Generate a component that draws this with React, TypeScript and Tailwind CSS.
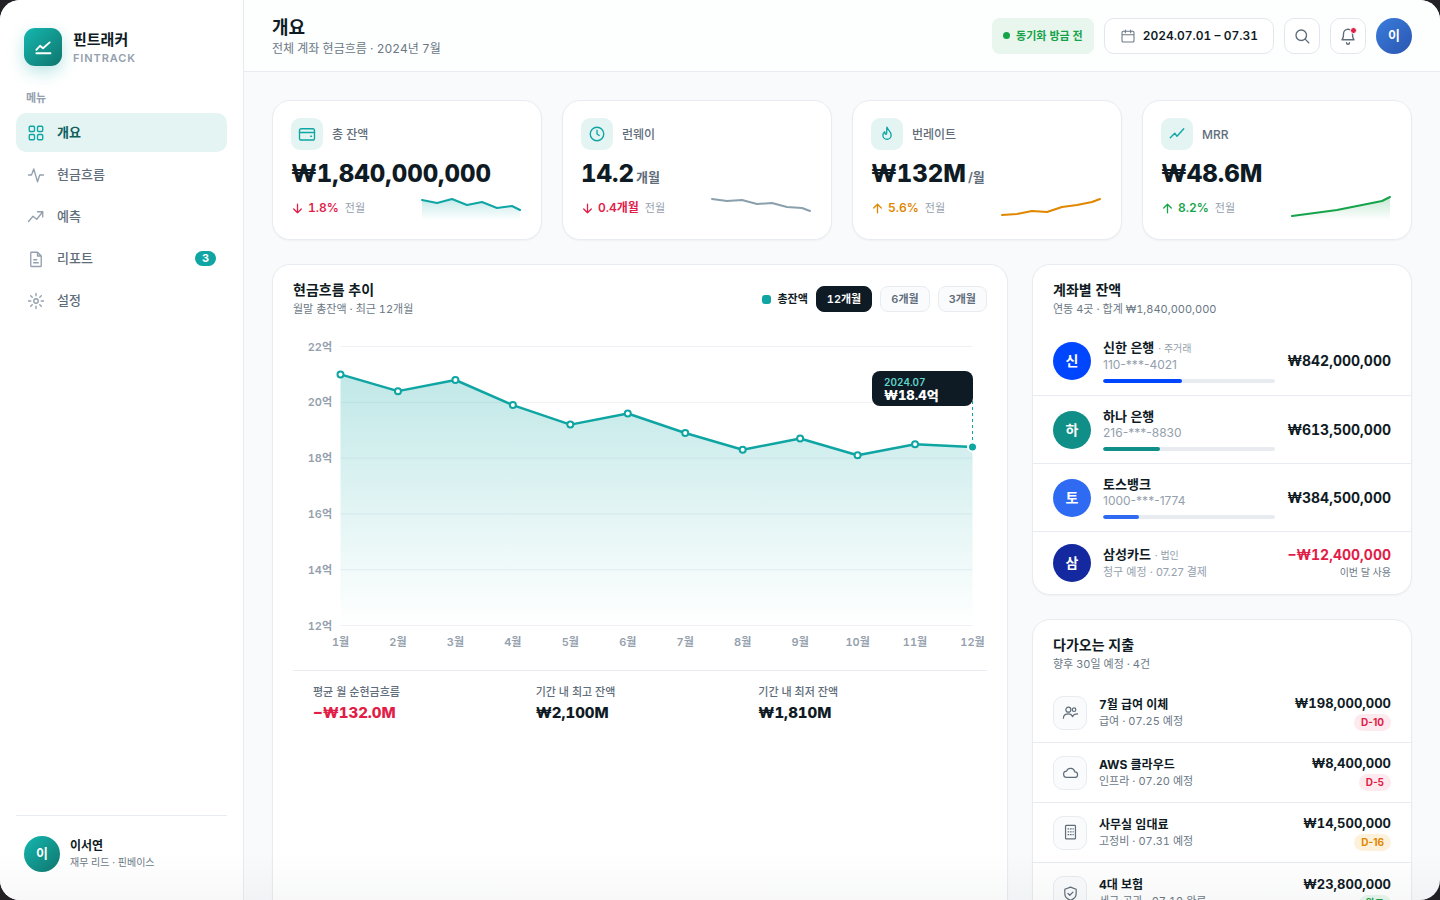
import { useState } from "react";
import type { ReactNode } from "react";

const ICONS: Record<string, ReactNode> = {
    grid: (
        <>
            <rect x="3" y="3" width="7" height="7" rx="1.5" />
            <rect x="14" y="3" width="7" height="7" rx="1.5" />
            <rect x="3" y="14" width="7" height="7" rx="1.5" />
            <rect x="14" y="14" width="7" height="7" rx="1.5" />
        </>
    ),
    pulse: <path d="M2 12h4l3-8 5 17 3-9h5" />,
    trend: <path d="M2 18l6-7 5 4 8-10M14 5h7v7" />,
    doc: <path d="M14 3H6a1 1 0 0 0-1 1v17a1 1 0 0 0 1 1h12a1 1 0 0 0 1-1V8zM14 3v5h5M9 13h4M9 17h6" />,
    gear: (
        <>
            <circle cx="12" cy="12" r="3" />
            <path d="M12 2v3M12 19v3M4.9 4.9l2.1 2.1M17 17l2.1 2.1M2 12h3M19 12h3M4.9 19.1L7 17M17 7l2.1-2.1" />
        </>
    ),
    calendar: <path d="M5 5h14a2 2 0 0 1 2 2v12a2 2 0 0 1-2 2H5a2 2 0 0 1-2-2V7a2 2 0 0 1 2-2zM3 10h18M8 3v4M16 3v4" />,
    search: (
        <>
            <circle cx="11" cy="11" r="7" />
            <path d="M16.5 16.5L21 21" />
        </>
    ),
    bell: <path d="M18 9a6 6 0 0 0-12 0c0 6-2 8-2 8h16s-2-2-2-8M10 21a2 2 0 0 0 4 0" />,
    wallet: (
        <>
            <rect x="2" y="5" width="20" height="15" rx="2.5" />
            <path d="M2 10h20M17 15h1" />
        </>
    ),
    clock: (
        <>
            <circle cx="12" cy="12" r="9" />
            <path d="M12 7v5l3 2" />
        </>
    ),
    flame: <path d="M12 3c1 4 5.500 5.500 5.500 10.500a5.500 5.500 0 0 1-11 0c0-2 1-3.500 2.500-4.500 0 2 .8 3.500 2 3.500 1.500-2 0-5.500 1-9.500z" />,
    line: <path d="M3 17l6-6 3 4 9-10" />,
    people: (
        <>
            <circle cx="9" cy="8" r="3.500" />
            <circle cx="17" cy="8" r="2.500" />
            <path d="M2 20c0-4 3-6 7-6 3 0 5 1.500 6 4 1-3 3-4 7-4" />
        </>
    ),
    cloud: <path d="M7 19a4.500 4.500 0 0 1-.5-9A6 6 0 0 1 18 11a4 4 0 0 1 0 8z" />,
    building: (
        <>
            <rect x="5" y="2" width="14" height="19" rx="1" />
            <path d="M8.500 7h1M12 7h1M15.500 7h.5M8.500 11h1M12 11h1M15.500 11h.5M8.500 15h1M12 15h1M15.500 15h.5" />
        </>
    ),
    shield: <path d="M12 3l8 3v6c0 5-3.500 8-8 9.500C7.500 20 4 17 4 12V6zM8.500 12l2.500 2.500 4.500-4.500" />,
    down: <path d="M12 4v16M5 13l7 7 7-7" />,
    up: <path d="M12 20V4M5 11l7-7 7 7" />,
};

function Icon({ name, className }: { name: string; className: string }) {
    return (
        <svg
            viewBox="0 0 24 24"
            className={"shrink-0 " + className}
            fill="none"
            stroke="currentColor"
            strokeLinecap="round"
            strokeLinejoin="round"
            aria-hidden="true"
        >
            {ICONS[name]}
        </svg>
    );
}

const NAV = [
    { icon: "grid", label: "개요" },
    { icon: "pulse", label: "현금흐름" },
    { icon: "trend", label: "예측" },
    { icon: "doc", label: "리포트", badge: 3 },
    { icon: "gear", label: "설정" },
];

const KPIS = [
    { icon: "wallet", label: "총 잔액", value: "₩1,840,000,000", unit: "", dir: "down", delta: "1.8%", tone: "text-[#e11d48]", stroke: "#0ea5a3", fill: true, points: [7, 10, 6, 12, 9, 15, 13, 17] },
    { icon: "clock", label: "런웨이", value: "14.2", unit: "개월", dir: "down", delta: "0.4개월", tone: "text-[#e11d48]", stroke: "#8aa0ad", fill: false, points: [6, 8, 7, 11, 10, 14, 15, 18] },
    { icon: "flame", label: "번레이트", value: "₩132M", unit: "/월", dir: "up", delta: "5.6%", tone: "text-[#e08700]", stroke: "#e08700", fill: false, points: [22, 21, 18, 19, 14, 12, 9, 6] },
    { icon: "line", label: "MRR", value: "₩48.6M", unit: "", dir: "up", delta: "8.2%", tone: "text-[#16a34a]", stroke: "#16a34a", fill: true, points: [23, 21, 19, 17, 14, 11, 8, 4] },
];

const SPARK_X = [3, 18, 33, 48, 63, 78, 93, 101];

const ACCOUNTS = [
    { mark: "신", name: "신한 은행", tag: "· 주거래", sub: "110-***-4021", amount: "₩842,000,000", share: 46, color: "#0046ff" },
    { mark: "하", name: "하나 은행", sub: "216-***-8830", amount: "₩613,500,000", share: 33, color: "#0f8f87" },
    { mark: "토", name: "토스뱅크", sub: "1000-***-1774", amount: "₩384,500,000", share: 21, color: "#2f6bf2" },
    { mark: "삼", name: "삼성카드", tag: "· 법인", sub: "청구 예정 · 07.27 결제", amount: "−₩12,400,000", note: "이번 달 사용", color: "#1428a0" },
];

const UPCOMING = [
    { icon: "people", name: "7월 급여 이체", sub: "급여 · 07.25 예정", amount: "₩198,000,000", due: "D-10", tone: "bg-[#fdeaee] text-[#e11d48]" },
    { icon: "cloud", name: "AWS 클라우드", sub: "인프라 · 07.20 예정", amount: "₩8,400,000", due: "D-5", tone: "bg-[#fdeaee] text-[#e11d48]" },
    { icon: "building", name: "사무실 임대료", sub: "고정비 · 07.31 예정", amount: "₩14,500,000", due: "D-16", tone: "bg-[#fdf1dc] text-[#e08700]" },
    { icon: "shield", name: "4대 보험", sub: "세금·공과 · 07.10 완료", amount: "₩23,800,000", due: "완료", tone: "bg-[#e8f6ed] text-[#16a34a]" },
];

const BALANCE = [21, 20.4, 20.8, 19.9, 19.2, 19.6, 18.9, 18.3, 18.7, 18.1, 18.5, 18.4];
const TICKS = [22, 20, 18, 16, 14, 12];

const STATS = [
    { label: "평균 월 순현금흐름", value: "−₩132.0M", tone: "text-[#e11d48]" },
    { label: "기간 내 최고 잔액", value: "₩2,100M", tone: "text-[#0f1b24]" },
    { label: "기간 내 최저 잔액", value: "₩1,810M", tone: "text-[#0f1b24]" },
];

const CARD = "rounded-[18px] border border-[#e8ecf1] bg-white shadow-[0_1px_2px_rgba(15,27,36,0.04)]";

function Sparkline({ id, points, stroke, fill }: { id: string; points: number[]; stroke: string; fill: boolean }) {
    const line = points.map((y, i) => `${SPARK_X[i]},${y}`).join(" ");
    return (
        <svg viewBox="0 0 104 28" className="h-7 w-26 shrink-0" fill="none" aria-hidden="true">
            <defs>
                <linearGradient id={id} x1="0" y1="0" x2="0" y2="1">
                    <stop offset="0" stopColor={stroke} stopOpacity="0.24" />
                    <stop offset="1" stopColor={stroke} stopOpacity="0" />
                </linearGradient>
            </defs>
            {fill && <polygon points={`3,27 ${line} 101,27`} fill={`url(#${id})`} />}
            <polyline points={line} stroke={stroke} strokeWidth="2" strokeLinecap="round" strokeLinejoin="round" />
        </svg>
    );
}

function BalanceChart() {
    const x = (i: number) => 47.5 + (i * 632) / 11;
    const y = (v: number) => 16.5 + (22 - v) * 27.9;
    const line = BALANCE.map((v, i) => `${x(i)},${y(v)}`).join(" ");
    const last = BALANCE.length - 1;

    return (
        <svg viewBox="0 0 694 324" className="block w-full" role="img" aria-label="현금흐름 추이">
            <defs>
                <linearGradient id="balance" x1="0" y1="0" x2="0" y2="1">
                    <stop offset="0" stopColor="#0ea5a3" stopOpacity="0.26" />
                    <stop offset="1" stopColor="#0ea5a3" stopOpacity="0" />
                </linearGradient>
            </defs>
            {TICKS.map((t) => (
                <g key={t}>
                    <line x1="47.500" x2="679.500" y1={y(t)} y2={y(t)} stroke="#eef1f5" />
                    <text x="39" y={y(t) + 4} textAnchor="end" className="fill-[#94a0ad] text-[11px] font-semibold">{t}억</text>
                </g>
            ))}
            <polygon points={`${x(0)},${y(12)} ${line} ${x(last)},${y(12)}`} fill="url(#balance)" />
            <polyline points={line} fill="none" stroke="#0ea5a3" strokeWidth="2.500" strokeLinejoin="round" />
            {BALANCE.map((v, i) => (
                <g key={i}>
                    {i < last && <circle cx={x(i)} cy={y(v)} r="3" fill="#fff" stroke="#0ea5a3" strokeWidth="2" />}
                    <text x={x(i)} y="316" textAnchor="middle" className="fill-[#94a0ad] text-[11px] font-semibold">{i + 1}월</text>
                </g>
            ))}
            <line x1={x(last)} x2={x(last)} y1="59" y2={y(18.4)} stroke="#0ea5a3" strokeDasharray="3 3" />
            <circle cx={x(last)} cy={y(18.4)} r="4.500" fill="#0ea5a3" stroke="#fff" strokeWidth="2" />
            <rect x="579" y="41" width="101" height="35" rx="8" fill="#0f1b24" />
            <text x="591" y="56" className="fill-[#5fd4cc] text-[10px] font-semibold">2024.07</text>
            <text x="591" y="70" className="fill-white text-[13px] font-extrabold">₩18.4억</text>
        </svg>
    );
}

function PanelHeader({ title, sub }: { title: string; sub: string }) {
    return (
        <div>
            <h2 className="text-sm leading-5 font-bold">{title}</h2>
            <p className="text-[11px] leading-[18px] text-[#6b7885]">{sub}</p>
        </div>
    );
}

export default function App() {
    const [active, setActive] = useState("개요");
    const [range, setRange] = useState(12);

    return (
        <div className="h-screen bg-[#232126] font-['Inter','Noto_Sans_CJK_KR',sans-serif] text-[#0f1b24] tabular-nums">
            <div className="relative flex h-full overflow-hidden rounded-[20px] bg-[#f8fafc]">
                {/* Sidebar */}
                <aside className="flex w-61 shrink-0 flex-col border-r border-[#e8ecf1] bg-white px-4 py-5">
                    <div className="flex items-center gap-[11px] p-2">
                        <div className="flex size-[38px] items-center justify-center rounded-[11px] bg-linear-to-br from-[#14b8b0] to-[#0f766e] text-white shadow-[0_6px_16px_rgba(14,165,163,0.28)]">
                            <svg viewBox="0 0 24 24" className="size-5" fill="none" stroke="currentColor" strokeWidth="2.200" strokeLinecap="round" strokeLinejoin="round" aria-hidden="true">
                                <path d="M4 15.500l4.500-5 3.500 3 8-7M4 19.500h17" />
                            </svg>
                        </div>
                        <div>
                            <p className="pt-0.5 text-[15px] leading-5 font-bold">핀트래커</p>
                            <p className="text-[11px] leading-4 font-semibold tracking-[0.08em] text-[#94a0ad]">FINTRACK</p>
                        </div>
                    </div>

                    <p className="mt-4 px-2.5 text-[11px] leading-4 font-semibold text-[#94a0ad]">메뉴</p>
                    <nav className="mt-[7px] flex flex-col gap-[3px]">
                        {NAV.map((item) => (
                            <button
                                key={item.label}
                                type="button"
                                onClick={() => setActive(item.label)}
                                className={
                                    "flex h-[39px] items-center gap-3 rounded-[10px] px-[11px] text-left text-[13px] " +
                                    (active === item.label ? "bg-[#e4f4f3] font-bold text-[#0f5f5c]" : "font-medium text-[#5f6d7a]")
                                }
                            >
                                <Icon name={item.icon} className={"size-[18px] stroke-[1.8] " + (active === item.label ? "text-[#0ea5a3]" : "text-[#94a0ad]")} />
                                <span className="flex-1">{item.label}</span>
                                {item.badge && (
                                    <span className="rounded-full bg-[#0ea5a3] px-[7px] text-[11px] leading-[15px] font-bold text-white">{item.badge}</span>
                                )}
                            </button>
                        ))}
                    </nav>

                    <div className="mt-auto flex items-center gap-2.5 border-t border-[#e8ecf1] px-2 pt-5 pb-2">
                        <div className="flex size-9 items-center justify-center rounded-full bg-linear-to-br from-[#14b8b0] to-[#0f766e] text-[13px] font-bold text-white">이</div>
                        <div>
                            <p className="text-xs leading-4 font-bold">이서연</p>
                            <p className="text-[10px] leading-4 text-[#6b7885]">재무 리드 · 핀베이스</p>
                        </div>
                    </div>
                </aside>

                <div className="flex min-w-0 flex-1 flex-col">
                    {/* Top bar */}
                    <header className="flex h-18 shrink-0 items-center gap-2.5 border-b border-[#e8ecf1] bg-[#fdfefe] px-7">
                        <div className="mr-auto pt-0.5">
                            <h1 className="text-lg leading-6 font-bold">개요</h1>
                            <p className="text-xs leading-[18px] text-[#6b7885]">전체 계좌 현금흐름 · 2024년 7월</p>
                        </div>
                        <div className="flex h-9 items-center gap-1.5 rounded-lg bg-[#e8f6ed] px-[11px] text-[11px] font-semibold text-[#16a34a]">
                            <span className="size-[7px] rounded-full bg-[#16a34a]" />
                            <span className="pt-0.5">동기화 방금 전</span>
                        </div>
                        <button type="button" className="flex h-9 items-center gap-[7px] rounded-[10px] border border-[#e1e7ee] bg-white px-[15px] text-xs font-semibold">
                            <Icon name="calendar" className="size-4 stroke-[1.6] text-[#6b7885]" />
                            2024.07.01 – 07.31
                        </button>
                        <button type="button" aria-label="검색" className="flex size-9 items-center justify-center rounded-[10px] border border-[#e1e7ee] bg-white text-[#5f6d7a]">
                            <Icon name="search" className="size-[18px] stroke-[1.8]" />
                        </button>
                        <button type="button" aria-label="알림" className="relative flex size-9 items-center justify-center rounded-[10px] border border-[#e1e7ee] bg-white text-[#5f6d7a]">
                            <Icon name="bell" className="size-[18px] stroke-[1.8]" />
                            <span className="absolute top-2 right-2 size-[7px] rounded-full border border-white bg-[#e11d48]" />
                        </button>
                        <div className="flex size-9 items-center justify-center rounded-full bg-linear-to-br from-[#3b7ddd] to-[#2a56b0] text-[13px] font-bold text-white">이</div>
                    </header>

                    <main className="min-h-0 flex-1 overflow-hidden p-7">
                        {/* KPI cards */}
                        <section className="grid grid-cols-4 gap-5">
                            {KPIS.map((kpi) => (
                                <article key={kpi.label} className={CARD + " p-[18px] pt-[17px]"}>
                                    <div className="flex items-center gap-[9px]">
                                        <div className="flex size-8 items-center justify-center rounded-[9px] bg-[#e4f4f3] text-[#0ea5a3]">
                                            <Icon name={kpi.icon} className="size-[18px] stroke-[1.8]" />
                                        </div>
                                        <p className="pt-0.5 text-xs font-medium text-[#5f6d7a]">{kpi.label}</p>
                                    </div>
                                    <p className="mt-2 flex items-baseline gap-0.5 text-2xl leading-8 font-extrabold">
                                        {kpi.value}
                                        {kpi.unit && <span className="text-[13px] leading-4 font-semibold text-[#5f6d7a]">{kpi.unit}</span>}
                                    </p>
                                    <div className="mt-[3px] flex items-center justify-between">
                                        <p className={"flex items-center gap-1 pt-0.5 text-xs font-semibold " + kpi.tone}>
                                            <Icon name={kpi.dir} className="size-[13px] stroke-[2.4]" />
                                            {kpi.delta}
                                            <span className="ml-0.5 text-[11px] font-normal text-[#94a0ad]">전월</span>
                                        </p>
                                        <Sparkline id={"spark-" + kpi.icon} points={kpi.points} stroke={kpi.stroke} fill={kpi.fill} />
                                    </div>
                                </article>
                            ))}
                        </section>

                        <div className="mt-6 grid grid-cols-[minmax(0,1fr)_380px] gap-6">
                            {/* Cash flow chart */}
                            <section className={CARD + " px-5 pt-[15px]"}>
                                <div className="flex items-center justify-between">
                                    <PanelHeader title="현금흐름 추이" sub="월말 총잔액 · 최근 12개월" />
                                    <div className="flex items-center gap-2">
                                        <span className="flex items-center gap-1.5 text-[11px] font-semibold">
                                            <span className="size-[9px] rounded-[3px] bg-[#0ea5a3]" />
                                            총잔액
                                        </span>
                                        {[12, 6, 3].map((months) => (
                                            <button
                                                key={months}
                                                type="button"
                                                onClick={() => setRange(months)}
                                                className={
                                                    "h-[26px] rounded-lg border px-2.5 text-[11px] font-semibold " +
                                                    (range === months
                                                        ? "border-[#0f1b24] bg-[#0f1b24] text-white"
                                                        : "border-[#e8ecf1] bg-[#fafbfd] text-[#5f6d7a]")
                                                }
                                            >
                                                {months}개월
                                            </button>
                                        ))}
                                    </div>
                                </div>
                                <div className="mt-3">
                                    <BalanceChart />
                                </div>
                                <dl className="mt-4 grid grid-cols-3 gap-3.5 border-t border-[#e8ecf1] px-5 pt-3">
                                    {STATS.map((stat) => (
                                        <div key={stat.label}>
                                            <dt className="text-[11px] leading-[18px] font-medium text-[#5f6d7a]">{stat.label}</dt>
                                            <dd className={"mt-0.5 text-[15px] leading-5 font-extrabold " + stat.tone}>{stat.value}</dd>
                                        </div>
                                    ))}
                                </dl>
                            </section>

                            <div className="flex flex-col gap-6">
                                {/* Accounts */}
                                <section className={CARD}>
                                    <div className="px-5 pt-[15px] pb-[9px]">
                                        <PanelHeader title="계좌별 잔액" sub="연동 4곳 · 합계 ₩1,840,000,000" />
                                    </div>
                                    <ul className="divide-y divide-[#e8ecf1]">
                                        {ACCOUNTS.map((acc) => (
                                            <li key={acc.name} className="flex items-center gap-3 px-5 py-3">
                                                <div className="flex size-[38px] shrink-0 items-center justify-center rounded-full text-sm font-bold text-white" style={{ backgroundColor: acc.color }}>
                                                    {acc.mark}
                                                </div>
                                                <div className="min-w-0 flex-1">
                                                    <p className="text-[13px] leading-4 font-semibold">
                                                        {acc.name}
                                                        {acc.tag && <span className="ml-1 text-[10px] font-normal text-[#94a0ad]">{acc.tag}</span>}
                                                    </p>
                                                    <p className={"leading-[18px] text-[#94a0ad] proportional-nums " + (acc.note ? "text-[11px]" : "text-xs")}>{acc.sub}</p>
                                                    {acc.share && (
                                                        <div className="mt-[5px] h-1 overflow-hidden rounded-full bg-[#e8ecf1]">
                                                            <div className="h-full rounded-full" style={{ width: `${acc.share}%`, backgroundColor: acc.color }} />
                                                        </div>
                                                    )}
                                                </div>
                                                <div className="text-right">
                                                    <p className={"text-sm leading-[18px] font-bold " + (acc.note ? "text-[#e11d48]" : "")}>{acc.amount}</p>
                                                    {acc.note && <p className="text-[10px] leading-4 text-[#6b7885]">{acc.note}</p>}
                                                </div>
                                            </li>
                                        ))}
                                    </ul>
                                </section>

                                {/* Upcoming payments */}
                                <section className={CARD}>
                                    <div className="px-5 pt-[15px] pb-2.5">
                                        <PanelHeader title="다가오는 지출" sub="향후 30일 예정 · 4건" />
                                    </div>
                                    <ul className="divide-y divide-[#e8ecf1]">
                                        {UPCOMING.map((item) => (
                                            <li key={item.name} className="flex h-[60px] items-center gap-3 px-5">
                                                <div className="flex size-[34px] shrink-0 items-center justify-center rounded-[10px] border border-[#e8ecf1] bg-[#fafbfd] text-[#5f6d7a]">
                                                    <Icon name={item.icon} className="size-[17px] stroke-[1.7]" />
                                                </div>
                                                <div className="min-w-0 flex-1">
                                                    <p className="text-xs leading-[17px] font-bold">{item.name}</p>
                                                    <p className="text-[11px] leading-[17px] text-[#6b7885]">{item.sub}</p>
                                                </div>
                                                <div className="flex flex-col items-end gap-0.5">
                                                    <p className="text-[13px] leading-[18px] font-bold">{item.amount}</p>
                                                    <span className={"rounded-full px-[7px] text-[10px] leading-[17px] font-bold proportional-nums " + item.tone}>{item.due}</span>
                                                </div>
                                            </li>
                                        ))}
                                    </ul>
                                </section>
                            </div>
                        </div>
                    </main>
                </div>

                {/* Soft fade along the bottom edge */}
                <div className="pointer-events-none absolute inset-x-0 bottom-0 h-12 bg-linear-to-b from-transparent to-[#0f1b24]/3" />
            </div>
        </div>
    );
}
